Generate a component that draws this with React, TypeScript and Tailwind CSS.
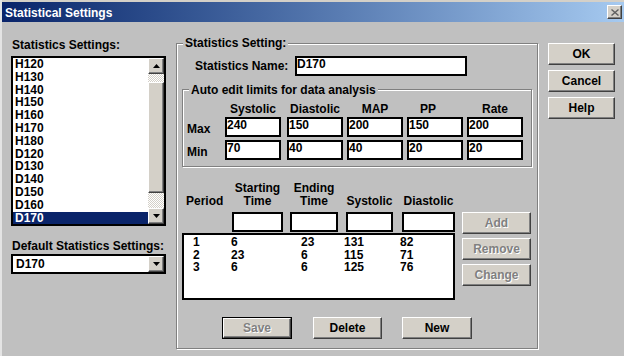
import React from "react";

const face = "bg-[#d4d0c8]";
const raised =
  "border border-t-white border-l-white border-r-[#404040] border-b-[#404040] shadow-[inset_-1px_-1px_0_#808080]";
const sunken = "bg-white border-2 border-black";
const etched = "border border-[#808080] shadow-[inset_1px_1px_0_#ffffff,1px_1px_0_#ffffff]";
const greyed = "text-[#808080] [text-shadow:1px_1px_0_#ffffff]";
const checker =
  "bg-[image:repeating-conic-gradient(#d4d0c8_0_25%,#ffffff_0_50%)] bg-[length:2px_2px]";

const settings = [
  "H120", "H130", "H140", "H150", "H160", "H170", "H180",
  "D120", "D130", "D140", "D150", "D160", "D170",
];

const limits = [
  { label: "Max", values: ["240", "150", "200", "150", "200"] },
  { label: "Min", values: ["70", "40", "40", "20", "20"] },
];
const limitCols = ["Systolic", "Diastolic", "MAP", "PP", "Rate"];
const limitGap = ["mr-[6px]", "mr-[4px]", "mr-[4px]", "mr-[4px]", ""];

const periods = [
  ["1", "6", "23", "131", "82"],
  ["2", "23", "6", "115", "71"],
  ["3", "6", "6", "125", "76"],
];

// width + right gap for the period table columns (after the "Period" column)
const periodCols = [
  { head: ["Starting", "Time"], cls: "w-[51px] mr-[7px]" },
  { head: ["Ending", "Time"], cls: "w-[48px] mr-[8px]" },
  { head: ["Systolic"], cls: "w-[47px] mr-[9px]" },
  { head: ["Diastolic"], cls: "w-[53px]" },
];

function Arrow({ down }: { down?: boolean }) {
  return (
    <svg width="7" height="4" viewBox="0 0 7 4">
      <polygon points={down ? "0,0 7,0 3.5,4" : "0,4 7,4 3.5,0"} fill="#000" />
    </svg>
  );
}

function Button({
  label,
  disabled,
  isDefault,
  className = "",
}: {
  label: string;
  disabled?: boolean;
  isDefault?: boolean;
  className?: string;
}) {
  const inner = (
    <div
      className={`${face} ${raised} flex h-full w-full items-center justify-center font-bold ${
        disabled ? greyed : "text-black"
      }`}
    >
      {label}
    </div>
  );
  return <div className={`${isDefault ? "border border-black" : ""} ${className}`}>{inner}</div>;
}

function TextBox({ value = "", className = "" }: { value?: string; className?: string }) {
  return <div className={`${sunken} h-[20px] leading-[12px] ${className}`}>{value}</div>;
}

function Legend({ children, top }: { children: React.ReactNode; top: string }) {
  return (
    <span className={`absolute left-[6px] ${top} bg-[#c0c0c0] px-[2px] leading-[14px]`}>{children}</span>
  );
}

export default function App() {
  return (
    <div className="h-[356px] w-[624px] overflow-hidden border-l-2 border-l-[#e4e4e4] bg-[#c0c0c0] font-['Liberation_Sans',Arial,sans-serif] text-[12px] font-bold text-black">
      {/* title bar */}
      <div className="flex h-[22px] items-center justify-between border-t-2 border-t-[#d4d0c8] bg-linear-to-r from-[#0a246a] to-[#a6caf0]">
        <span className="pl-[3px] pt-[2px] leading-[14px] text-white">Statistical Settings</span>
        <div className={`${face} ${raised} mr-[2px] flex h-[14px] w-[15px] items-center justify-center`}>
          <svg width="8" height="7" viewBox="0 0 8 7">
            <path d="M0.5 0.5 L7.5 6.5 M7.5 0.5 L0.5 6.5" stroke="#606060" strokeWidth="1.4" />
          </svg>
        </div>
      </div>

      <div className="flex items-start">
        {/* left column */}
        <div className="w-[174px] pl-[9px] pt-[16px]">
          <div className="h-[14px] pl-px leading-[14px]">Statistics Settings:</div>
          <div className={`${sunken} mt-[4px] flex h-[170px] w-[155px]`}>
            <div className="flex-1 overflow-hidden">
              {settings.map((s) => (
                <div
                  key={s}
                  className={`h-[12.8px] pl-[2px] leading-[13px] ${
                    s === "D170" ? "bg-[#0a246a] text-white" : ""
                  }`}
                >
                  {s}
                </div>
              ))}
            </div>
            <div className="flex w-[16px] flex-col">
              <div className={`${face} ${raised} flex h-[16px] items-center justify-center`}>
                <Arrow />
              </div>
              <div className={`${checker} h-[8px]`} />
              <div className={`${face} ${raised} h-[111px]`} />
              <div className={`${checker} flex-1`} />
              <div className={`${face} ${raised} flex h-[16px] items-center justify-center`}>
                <Arrow down />
              </div>
            </div>
          </div>

          <div className="mt-[13px] h-[14px] pl-px leading-[14px]">Default Statistics Settings:</div>
          <div className={`${sunken} mt-[1px] flex h-[20px] w-[155px] items-center`}>
            <span className="flex-1 pl-[3px] leading-[14px]">D170</span>
            <div className={`${face} ${raised} flex h-[16px] w-[16px] items-center justify-center`}>
              <Arrow down />
            </div>
          </div>
        </div>

        {/* Statistics Setting group */}
        <div className={`relative mt-[21px] h-[306px] w-[362px] ${etched}`}>
          <Legend top="-top-[8px]">Statistics Setting:</Legend>

          <div className="ml-[18px] mt-[12px] flex items-center">
            <span className="w-[100px] leading-[14px]">Statistics Name:</span>
            <TextBox value="D170" className="w-[172px]" />
          </div>

          <div className={`relative mx-[5px] mt-[13px] h-[78px] ${etched}`}>
            <Legend top="-top-[7px]">Auto edit limits for data analysis</Legend>
            <div className="mt-[12px] flex h-[14px] leading-[14px]">
              <div className="w-[42px]" />
              {limitCols.map((c, i) => (
                <div key={c} className={`w-[56px] text-center ${limitGap[i]} ${c === "PP" ? "pr-[14px]" : ""}`}>
                  {c}
                </div>
              ))}
            </div>
            {limits.map((row, r) => (
              <div key={row.label} className={`flex ${r === 0 ? "mt-[1px]" : "mt-[3px]"}`}>
                <div className="flex h-[20px] w-[42px] items-end pb-[1px] pl-[4px] leading-[14px]">{row.label}</div>
                {row.values.map((v, i) => (
                  <TextBox key={i} value={v} className={`w-[56px] ${limitGap[i]}`} />
                ))}
              </div>
            ))}
          </div>

          {/* period table */}
          <div className="mx-[5px] mt-[15px]">
            <div className="flex h-[26px] items-end leading-[13px]">
              <div className="w-[50px] pl-[4px]">Period</div>
              {periodCols.map((c) => (
                <div key={c.head.join()} className={`${c.cls} text-center`}>
                  {c.head.map((h) => (
                    <div key={h}>{h}</div>
                  ))}
                </div>
              ))}
            </div>
            <div className="flex">
              <div className="w-[273px]">
                <div className="mt-[4px] flex pl-[50px]">
                  {periodCols.map((c) => (
                    <TextBox key={c.head.join()} className={c.cls} />
                  ))}
                </div>
                <div className={`${sunken} mt-[1px] h-[67px] pl-[9px] pt-[1px]`}>
                  {periods.map((p) => (
                    <div key={p[0]} className="grid h-[12.5px] grid-cols-[38px_70px_43px_56px_1fr] leading-[13px]">
                      {p.map((v, i) => (
                        <span key={i}>{v}</span>
                      ))}
                    </div>
                  ))}
                </div>
              </div>
              <div className="ml-[7px] mt-[4px] flex flex-col gap-[4px]">
                <Button label="Add" disabled className="h-[22px] w-[69px]" />
                <Button label="Remove" disabled className="h-[22px] w-[69px]" />
                <Button label="Change" disabled className="h-[22px] w-[69px]" />
              </div>
            </div>

            <div className="ml-[40px] mt-[17px] flex">
              <Button label="Save" disabled isDefault className="h-[22px] w-[70px]" />
              <Button label="Delete" className="ml-[21px] h-[22px] w-[69px]" />
              <Button label="New" className="ml-[20px] h-[22px] w-[70px]" />
            </div>
          </div>
        </div>

        {/* dialog buttons */}
        <div className="ml-[10px] mt-[21px] flex flex-col gap-[5px]">
          <Button label="OK" className="h-[22px] w-[67px]" />
          <Button label="Cancel" className="h-[22px] w-[67px]" />
          <Button label="Help" className="h-[22px] w-[67px]" />
        </div>
      </div>
    </div>
  );
}
